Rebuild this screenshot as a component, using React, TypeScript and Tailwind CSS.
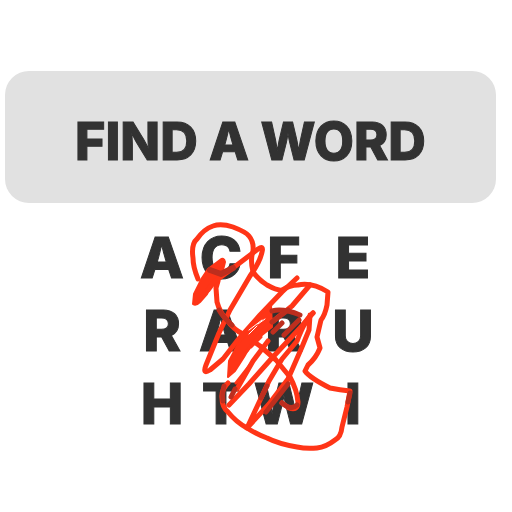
const rows = ["ACFE", "RARU", "HTWI"];

function Scribble() {
  return (
    <svg
      aria-hidden="true"
      viewBox="190 220 164 232"
      className="pointer-events-none absolute left-[58px] top-0 h-[232px] w-[164px] overflow-visible"
      fill="none"
      stroke="#ff3517"
      strokeWidth="5"
      strokeLinecap="round"
      strokeLinejoin="round"
    >
      <path d="M198 279Q193 267 193 258Q191 244 197 239Q204 229 213 226Q221 223 233 227Q246 232 249 236Q254 242 253 251Q250 260 253 272Q259 280 267 285Q278 291 282 290Q290 285 298 285Q312 282 328 292L327 305Q325 315 321 320L317 337L320 348Q316 358 308 365L305 371Q310 378 330 388Q340 390 350 391L347 407L342 427Q341 437 335 440Q326 447 317 448Q306 449 297 447Q279 444 267 438Q256 434 247 428Q236 422 228 412Q222 407 222 398Q221 390 228 383" />
      <path fill="#ff3517" strokeWidth="2" d="M220 260Q224 257 225 262L223 270L217 284L211 286L207 294L200 302Q196 306 193 304L194 294L202 278L208 269Z" />
      <path d="M218 281L216 288L217 302Q220 313 227 320Q234 330 243 334L260 346L276 360L290 377Q297 390 298 402Q298 411 289 408L282 403" />
      <path d="M208 290L214 282L233 268L258 249Q264 245 262 252Q260 262 250 276L230 310L219 333L206 365Q202 375 210 370L223 359L237 341L260 315L282 292L297 278" />
      <path d="M310 285L292 306L272 322L248 341" />
      <path fill="#ff3517" strokeWidth="2" d="M271 305L256 319L247 333L238 344L229 361L228 377L235 371L244 357L252 343L272 327Z" />
      <path d="M237 389L253 361L268 341M229 405L249 384L272 358L286 343L300 328L313 313" />
      <path d="M313 313Q306 318 297 341L282 359L269 381L247 428L269 404L288 379L302 347L309 330L310 315" />
      <path strokeWidth="3" d="M247 351L265 328L272 322M251 347L261 337M236 383L257 356" />
      <g stroke="#bd2e1e">
        <path strokeWidth="6" d="M210 270L221 274L233 268" />
        <path d="M219 310Q223 317 232 325M224 386Q222 392 223 401M282 403Q291 411 297 405M266 412L288 384M261 398L267 386" />
        <path d="M272 311Q283 308 300 315M272 322L288 310M273 332L282 323M284 335L299 320M350 393L348 402M235 389L231 397" />
      </g>
      <path stroke="#ffffff" strokeWidth="1" d="M249 330L262 320M249 334L257 326M258 324L265 319" />
    </svg>
  );
}

export default function App() {
  return (
    <main className="min-h-screen bg-white pt-[71px] font-['Inter',sans-serif] text-[#323232]">
      <header className="ml-[5px] mr-4 flex h-[132px] items-center justify-center rounded-[24px] bg-[#e1e1e1] pt-[10px]">
        <h1 className="whitespace-nowrap text-[52px] font-extrabold leading-[60px] [-webkit-text-stroke:1px_#323232]">
          FIND A WORD
        </h1>
      </header>
      <section className="relative mx-auto mt-[17px] w-[248px]" aria-label="Letter grid">
        <div className="grid grid-cols-[60px_58px_68px_70px] pt-px text-center text-[57px] font-extrabold leading-[73px] [-webkit-text-stroke:1px_#323232]">
          {rows.flatMap((row, r) => [...row].map((letter, c) => <span key={`${r}-${c}`}>{letter}</span>))}
        </div>
        <Scribble />
      </section>
    </main>
  );
}
